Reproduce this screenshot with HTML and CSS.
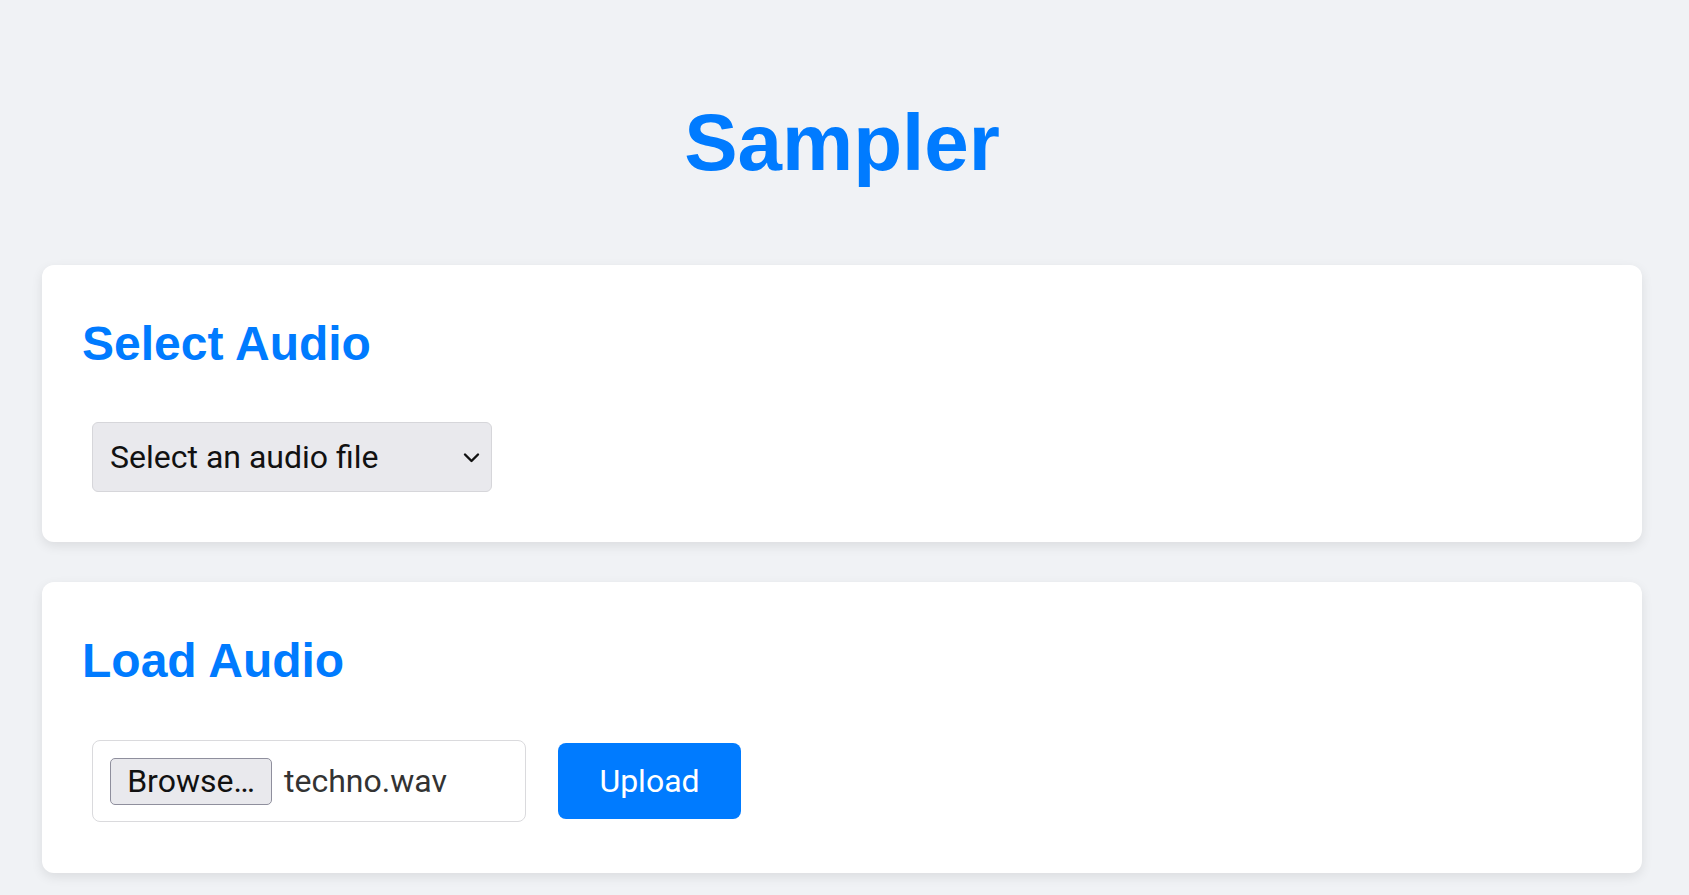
FILE: index.html
```html
<!DOCTYPE html>
<html lang="en">
<head>
<meta charset="utf-8">
<title>Sampler</title>
<link rel="stylesheet" href="styles.css">
</head>
<body>
<div class="page">
  <h1 class="title">Sampler</h1>

  <section class="card">
    <h2 class="card-title">Select Audio</h2>
    <div class="row">
      <div class="select">
        <span class="select-label">Select an audio file</span>
        <svg class="chevron" width="17" height="11" viewBox="0 0 17 11" aria-hidden="true">
          <polyline points="2,2.5 8.5,9 15,2.5" fill="none" stroke="#111" stroke-width="2.4" stroke-linecap="round" stroke-linejoin="round"/>
        </svg>
      </div>
    </div>
  </section>

  <section class="card">
    <h2 class="card-title">Load Audio</h2>
    <div class="row">
      <div class="file-input">
        <span class="browse-btn">Browse…</span>
        <span class="file-name">techno.wav</span>
      </div>
      <button class="upload-btn" type="button">Upload</button>
    </div>
  </section>
</div>
</body>
</html>
```
FILE: styles.css
```css
* {
  box-sizing: border-box;
}

html, body {
  margin: 0;
  padding: 0;
}

body {
  background: #f0f2f5;
  font-family: "Liberation Sans", Arial, sans-serif;
  font-size: 32px;
  line-height: 1.5;
  color: #222;
  overflow: hidden;
}

.page {
  padding: 83px 47px 20px 42px;
}

.title {
  margin: 0 0 62px;
  font-size: 80px;
  line-height: 120px;
  font-weight: 700;
  color: #007bff;
  text-align: center;
}

.card {
  background: #ffffff;
  border-radius: 12px;
  padding: 43px 40px 40px;
  margin-bottom: 40px;
  box-shadow: 0 4px 12px rgba(0, 0, 0, 0.09);
}

.card:last-child {
  margin-bottom: 0;
}

.card-title {
  margin: 0 0 32px;
  font-size: 48px;
  line-height: 72px;
  font-weight: 700;
  color: #007bff;
}

.row {
  display: flex;
  align-items: center;
  gap: 12px;
}

.select {
  margin: 10px;
  width: 400px;
  height: 70px;
  display: flex;
  align-items: center;
  justify-content: space-between;
  padding: 0 11px 0 17px;
  background: #e9e9ed;
  border: 1px solid #d6d6da;
  border-radius: 6px;
  font-family: Roboto, "Noto Sans", sans-serif;
  font-size: 32px;
  line-height: 38px;
  color: #111;
}

.chevron {
  flex: none;
}

.file-input {
  margin: 11px 10px;
  width: 434px;
  height: 82px;
  display: flex;
  align-items: center;
  gap: 12px;
  padding: 0 16px 0 17px;
  background: #ffffff;
  border: 1px solid #dadadd;
  border-radius: 8px;
  font-family: Roboto, "Noto Sans", sans-serif;
  font-size: 32px;
}

.browse-btn {
  width: 162px;
  height: 47px;
  display: flex;
  align-items: center;
  justify-content: center;
  background: #e9e9ed;
  border: 1px solid #8f8f9d;
  border-radius: 5px;
  color: #111;
  line-height: 45px;
}

.file-name {
  color: #333;
  line-height: 45px;
}

.upload-btn {
  margin: 0 10px;
  width: 183px;
  height: 76px;
  padding: 0;
  border: 0;
  border-radius: 8px;
  background: #007bff;
  color: #ffffff;
  font-family: Roboto, "Noto Sans", sans-serif;
  font-size: 32px;
  line-height: 38px;
  cursor: pointer;
}
```
